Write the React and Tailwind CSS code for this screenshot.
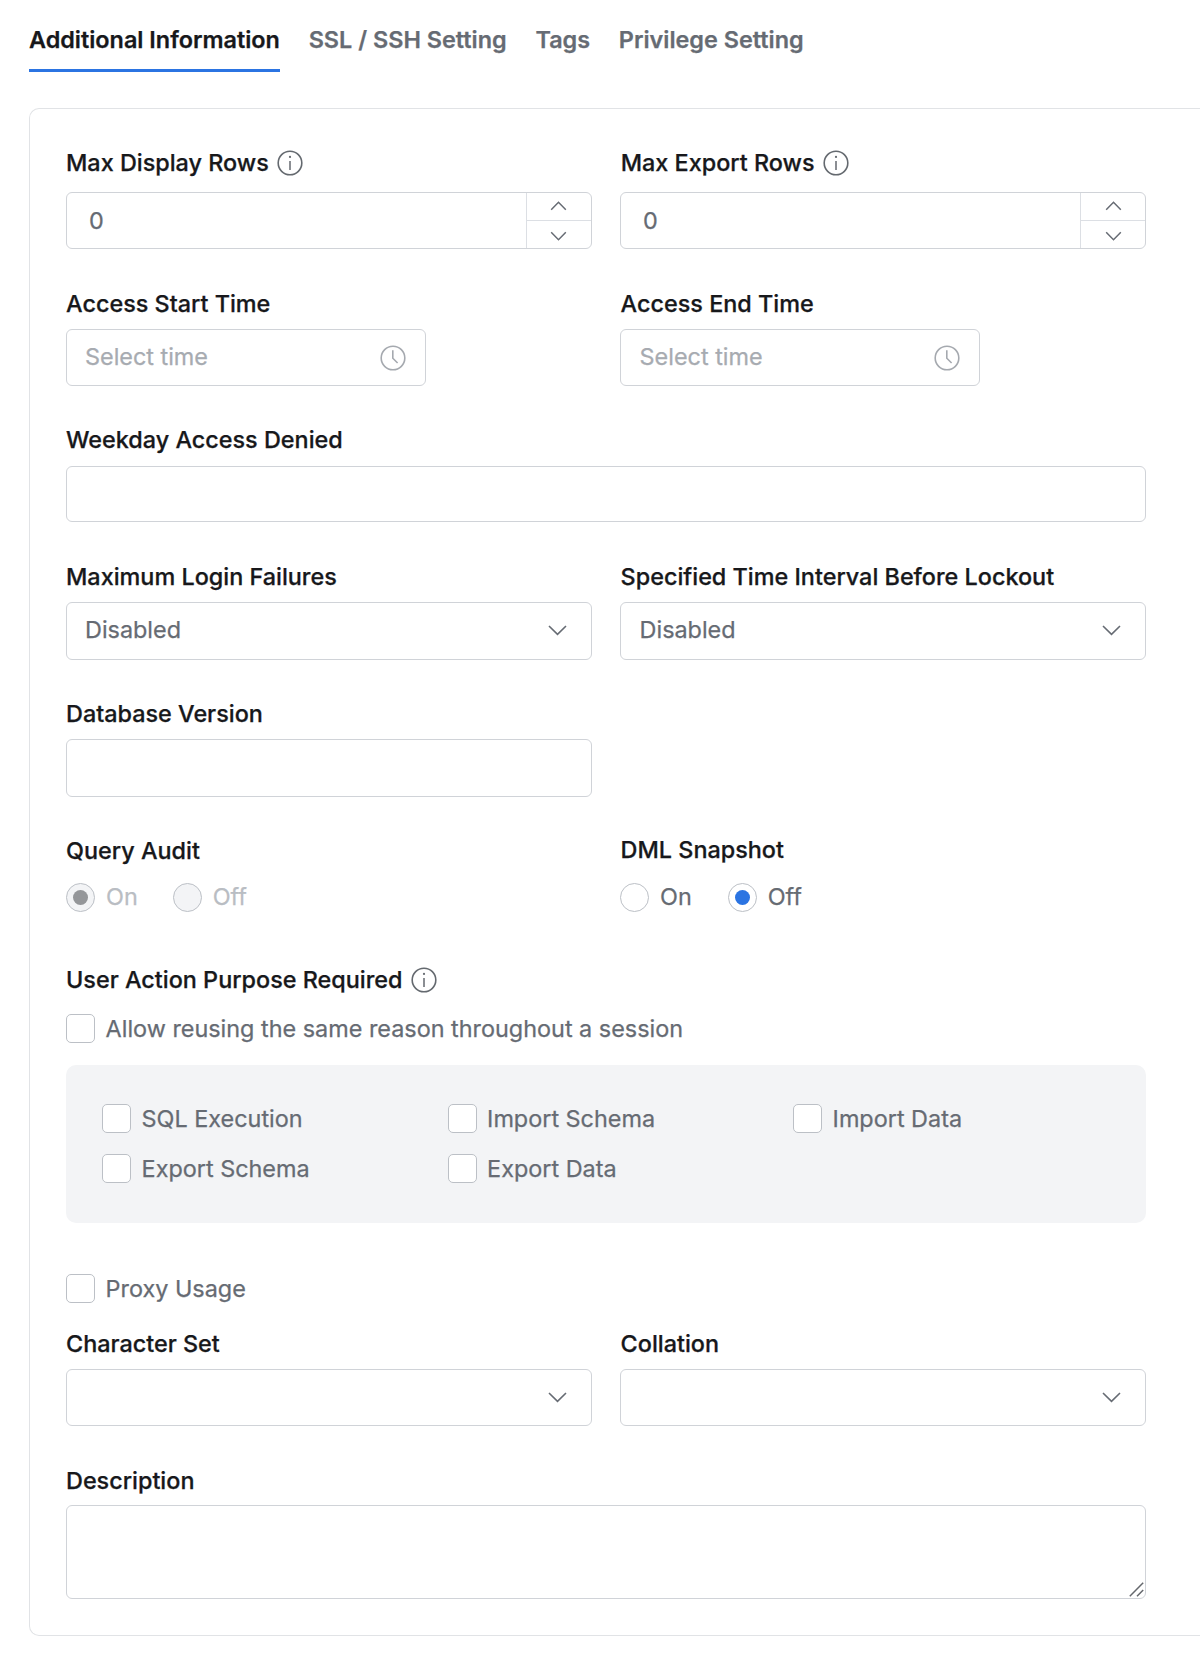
function InfoIcon() {
  return (
    <svg width="26" height="26" viewBox="0 0 26 26" fill="none" className="shrink-0 text-[#64696f]">
      <circle cx="13" cy="13" r="11.8" stroke="currentColor" strokeWidth="1.6" />
      <circle cx="13" cy="6.9" r="1.1" fill="currentColor" />
      <path d="M13 11v9" stroke="currentColor" strokeWidth="1.5" />
    </svg>
  );
}

function ClockIcon() {
  return (
    <svg width="26" height="26" viewBox="0 0 26 26" fill="none" className="shrink-0 text-[#a5a9af]">
      <circle cx="13" cy="13" r="11.8" stroke="currentColor" strokeWidth="1.6" />
      <path d="M12.8 5.2v8L17.6 18" stroke="currentColor" strokeWidth="1.6" />
    </svg>
  );
}

function SelectChevron() {
  return (
    <svg width="19" height="11" viewBox="0 0 19 11" fill="none" className="-mt-px shrink-0">
      <path d="M1 1l8.5 8.4L18 1" stroke="#666b73" strokeWidth="1.6" />
    </svg>
  );
}

function StepChevron({ className = "" }) {
  return (
    <svg width="17" height="10" viewBox="0 0 17 10" fill="none" className={className}>
      <path d="M1.2 8.7L8.5 1.3l7.3 7.4" stroke="#666b73" strokeWidth="1.5" />
    </svg>
  );
}

function Label({ children, info, className = "" }) {
  return (
    <div className={`flex h-[29px] items-center font-medium whitespace-nowrap text-[#17181b] ${className}`}>
      {children}
      {info && (
        <span className="ml-[8.5px] flex">
          <InfoIcon />
        </span>
      )}
    </div>
  );
}

const FRAME = "rounded-md border border-[#d0d3d8] bg-white";

function Stepper({ label, indent = "", chevronPad = "pr-px" }) {
  return (
    <div>
      <Label info className={`mb-[15px] ${indent}`}>{label}</Label>
      <div className={`flex h-[57px] items-stretch overflow-hidden ${FRAME}`}>
        <div className="flex flex-1 items-center pl-[22px]">0</div>
        <div className="flex w-[65px] flex-col border-l border-[#dcdfe4]">
          <div className={`flex h-[28px] items-center justify-center border-b border-[#dcdfe4] pb-0.5 ${chevronPad}`}>
            <StepChevron />
          </div>
          <div className={`flex flex-1 items-center justify-center pt-0.5 ${chevronPad}`}>
            <StepChevron className="rotate-180" />
          </div>
        </div>
      </div>
    </div>
  );
}

function TimeField({ label, indent = "" }) {
  return (
    <div>
      <Label className={`mb-[11px] ${indent}`}>{label}</Label>
      <div className={`flex h-[57px] w-[360px] items-center justify-between pr-[19px] pl-[18px] ${FRAME}`}>
        <span className={`-mt-0.5 text-[#a7abb1] ${indent}`}>Select time</span>
        <ClockIcon />
      </div>
    </div>
  );
}

function SelectField({ label, value, size = "h-[58px]", indent = "" }) {
  return (
    <div>
      <Label className={`mb-[11px] ${indent}`}>{label}</Label>
      <div className={`flex items-center justify-between pr-6 pl-[18px] ${size} ${FRAME}`}>
        <span className={`-mt-[3px] ${indent}`}>{value}</span>
        <SelectChevron />
      </div>
    </div>
  );
}

function Radio({ label, checked, disabled }) {
  return (
    <div className={`flex items-center gap-[11px] ${disabled ? "text-[#b9bdc3]" : ""}`}>
      <span
        className={`flex size-[29px] items-center justify-center rounded-full border border-[#bcc0c6] ${disabled ? "bg-[#f3f4f6]" : "bg-white"}`}
      >
        {checked && <span className={`size-[15px] rounded-full ${disabled ? "bg-[#949699]" : "bg-[#2b74e2]"}`} />}
      </span>
      <span className="-mt-0.5">{label}</span>
    </div>
  );
}

function RadioGroup({ label, value, disabled, labelClass, gap }) {
  return (
    <div>
      <Label className={labelClass}>{label}</Label>
      <div className={`flex ${gap}`}>
        <Radio label="On" checked={value === "On"} disabled={disabled} />
        <Radio label="Off" checked={value === "Off"} disabled={disabled} />
      </div>
    </div>
  );
}

function Checkbox({ label, className = "" }) {
  return (
    <div className={`flex h-[29px] items-center gap-[10.6px] ${className}`}>
      <span className="size-[29px] shrink-0 rounded-[5px] border border-[#bcc0c6] bg-white" />
      <span className="whitespace-nowrap">{label}</span>
    </div>
  );
}

const TABS = ["SSL / SSH Setting", "Tags", "Privilege Setting"];
const ACTIONS = ["SQL Execution", "Import Schema", "Import Data", "Export Schema", "Export Data"];

export default function App() {
  return (
    <div className="h-[1674px] overflow-hidden bg-white pt-[25px] pl-[29px] font-['Inter',sans-serif] text-[23.4px] leading-[29px] text-[#666b73] [-webkit-text-stroke:0.25px_currentColor]">
      <nav className="flex h-[47px] gap-[28.8px] font-semibold whitespace-nowrap">
        <div className="border-b-3 border-[#2b74e2] text-[#17181b]">Additional Information</div>
        {TABS.map((t) => (
          <div key={t}>{t}</div>
        ))}
      </nav>

      <main className="mt-9 h-[1528px] rounded-l-[10px] border border-r-0 border-[#e1e3e6] pt-[39px] pr-[54px] pl-9">
        <div className="grid grid-cols-2 gap-x-7">
          <Stepper label="Max Display Rows" />
          <Stepper label="Max Export Rows" indent="pl-[0.7px]" chevronPad="pl-px" />
        </div>

        <div className="mt-10 grid grid-cols-2 gap-x-7">
          <TimeField label="Access Start Time" />
          <TimeField label="Access End Time" indent="pl-[0.6px]" />
        </div>

        <div className="mt-[39px]">
          <Label className="mb-3">Weekday Access Denied</Label>
          <div className={`h-[56px] ${FRAME}`} />
        </div>

        <div className="mt-10 grid grid-cols-2 gap-x-7">
          <SelectField label="Maximum Login Failures" value="Disabled" />
          <SelectField label="Specified Time Interval Before Lockout" value="Disabled" indent="pl-[0.6px]" />
        </div>

        <div className="mt-[39px] grid grid-cols-2 gap-x-7">
          <div>
            <Label className="mb-[11px]">Database Version</Label>
            <div className={`h-[58px] ${FRAME}`} />
          </div>
        </div>

        <div className="mt-[38px] grid grid-cols-2 items-end gap-x-7">
          <RadioGroup label="Query Audit" value="On" disabled labelClass="mb-[18px]" gap="gap-[35px]" />
          <RadioGroup label="DML Snapshot" value="Off" labelClass="mb-[19px] pl-[0.6px]" gap="gap-9" />
        </div>

        <div className="mt-[53px]">
          <Label info>User Action Purpose Required</Label>
          <Checkbox label="Allow reusing the same reason throughout a session" className="mt-5" />
          <div className="mt-[22px] grid h-[158px] grid-cols-[repeat(3,345.5px)] content-start gap-y-[21px] rounded-[10px] bg-[#f3f4f6] pt-[39px] pl-9">
            {ACTIONS.map((a) => (
              <Checkbox key={a} label={a} />
            ))}
          </div>
        </div>

        <Checkbox label="Proxy Usage" className="mt-[51px]" />

        <div className="mt-[26px] grid grid-cols-2 gap-x-7">
          <SelectField label="Character Set" size="h-[57px]" />
          <SelectField label="Collation" size="h-[57px]" indent="pl-[0.6px]" />
        </div>

        <div className="mt-10">
          <Label className="mb-2.5">Description</Label>
          <div className={`flex h-[94px] items-end justify-end pr-px pb-px ${FRAME}`}>
            <svg width="15" height="15" viewBox="0 0 15 15" fill="none">
              <path d="M0.8 14.2L14.2 0.8M8 14.2l6.2-6.2" stroke="#65686d" strokeWidth="1.5" />
            </svg>
          </div>
        </div>
      </main>
    </div>
  );
}
